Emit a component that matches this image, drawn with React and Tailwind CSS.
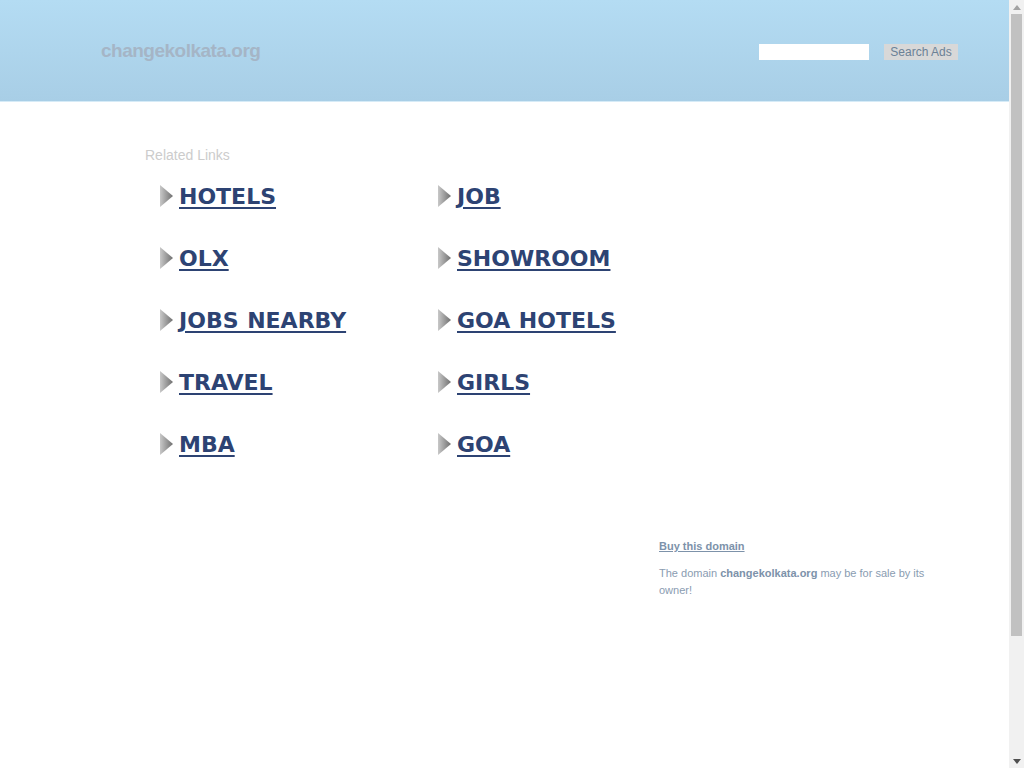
import React from 'react';

const left = ['HOTELS', 'OLX', 'JOBS NEARBY', 'TRAVEL', 'MBA'];
const right = ['JOB', 'SHOWROOM', 'GOA HOTELS', 'GIRLS', 'GOA'];

function Arrow() {
  return (
    <svg width="13" height="22" viewBox="0 0 13 22" className="shrink-0">
      <defs>
        <linearGradient id="ag" x1="0" y1="0" x2="1" y2="0">
          <stop offset="0" stopColor="#c8c8c8" />
          <stop offset="1" stopColor="#6f6f6f" />
        </linearGradient>
      </defs>
      <polygon points="0,0 13,11 0,22" fill="url(#ag)" />
    </svg>
  );
}

function LinkItem({ label }) {
  return (
    <div className="flex items-center h-[62px]">
      <Arrow />
      <a
        href="#"
        className="ml-[6px] text-[22px] font-bold text-[#2d4373] underline decoration-2 underline-offset-[3px] [word-spacing:1px]"
        style={{ fontFamily: '"DejaVu Sans", Verdana, sans-serif' }}
      >
        {label}
      </a>
    </div>
  );
}

function Scrollbar() {
  return (
    <div className="w-[15px] shrink-0 h-full bg-[#f1f1f1] flex flex-col items-center">
      <div className="h-[14px] flex items-center justify-center">
        <svg width="8" height="5" viewBox="0 0 8 5">
          <polygon points="4,0 8,5 0,5" fill="#a3a3a3" />
        </svg>
      </div>
      <div className="w-[11px] h-[622px] bg-[#c1c1c1]" />
      <div className="flex-1" />
      <div className="h-[14px] flex items-center justify-center">
        <svg width="8" height="5" viewBox="0 0 8 5">
          <polygon points="0,0 8,0 4,5" fill="#505050" />
        </svg>
      </div>
    </div>
  );
}

export default function App() {
  return (
    <div className="h-[768px] flex overflow-hidden bg-white" style={{ fontFamily: '"Liberation Sans", Arial, sans-serif' }}>
      <div className="flex-1 min-w-0 overflow-hidden">
        <header className="h-[102px] bg-gradient-to-b from-[#b4dcf3] to-[#a8cee6] border-b border-[#d6ebf7]">
          <div className="flex items-start justify-between pl-[101px] pr-[51px] pt-[37px]">
            <div className="text-[19px] font-bold tracking-[-0.5px] text-[#a5b5c6]">changekolkata.org</div>
            <div className="flex items-center gap-[15px] pt-[7px]">
              <input type="text" className="w-[110px] h-[16px] bg-white border-0 outline-none" />
              <button className="h-[16px] w-[74px] bg-[#d8d8d8] text-[12px] leading-[16px] text-[#6b8196]">
                Search Ads
              </button>
            </div>
          </div>
        </header>
        <main className="pl-[145px] pt-[44px]">
          <div className="text-[14px] text-[#cccccc] leading-[18px]">Related Links</div>
          <div className="flex pl-[15px] pt-[1px]">
            <div className="w-[278px]">
              {left.map((l) => (
                <LinkItem key={l} label={l} />
              ))}
            </div>
            <div>
              {right.map((l) => (
                <LinkItem key={l} label={l} />
              ))}
            </div>
          </div>
          <div className="pl-[514px] pt-[58px] w-[795px]">
            <a href="#" className="text-[11px] font-bold text-[#7d92aa] underline">
              Buy this domain
            </a>
            <p className="mt-[8px] text-[11px] leading-[17px] text-[#8a9cb1]">
              The domain <b className="text-[#7d92aa]">changekolkata.org</b> may be for sale by its owner!
            </p>
          </div>
        </main>
      </div>
      <Scrollbar />
    </div>
  );
}
